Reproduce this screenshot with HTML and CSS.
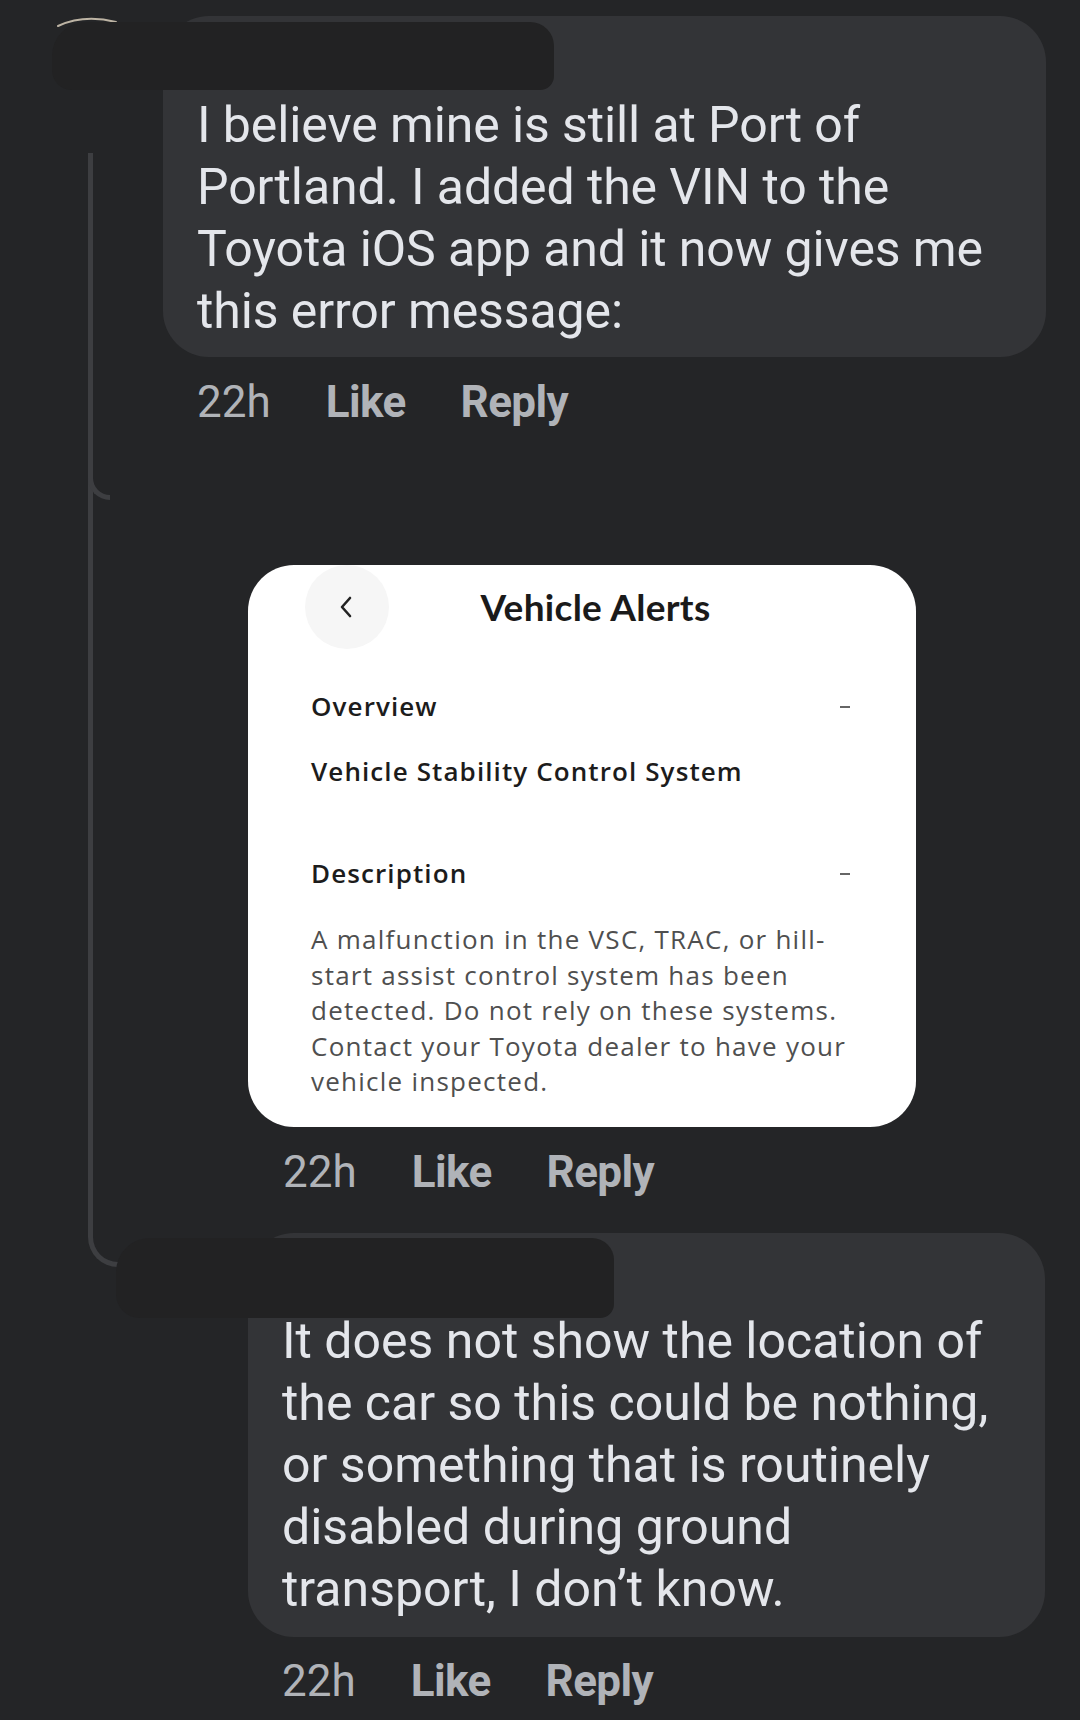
FILE: index.html
```html
<!DOCTYPE html>
<html lang="en">
<head>
<meta charset="utf-8">
<title>Comments</title>
<link rel="stylesheet" href="styles.css">
</head>
<body>
<div class="thread">
  <div class="thread-line"></div>
  <div class="thread-stub"></div>

  <div class="comment level1">
    <div class="bubble bubble-first">
      I believe mine is still at Port of<br>
      Portland. I added the VIN to the<br>
      Toyota iOS app and it now gives me<br>
      this error message:
    </div>
    <div class="actions">
      <span class="time">22h</span>
      <span class="act">Like</span>
      <span class="act">Reply</span>
    </div>
  </div>

  <div class="comment level2 photo-comment">
    <div class="card">
      <div class="card-header">
        <div class="back-btn">
          <svg width="14" height="22" viewBox="0 0 14 22"><polyline points="11,2 3,11 11,20" fill="none" stroke="#222" stroke-width="2.6" stroke-linecap="round" stroke-linejoin="round"/></svg>
        </div>
        <div class="card-title">Vehicle Alerts</div>
      </div>
      <div class="card-row row-overview">
        <span class="row-label">Overview</span>
        <span class="dash"></span>
      </div>
      <div class="row-value">Vehicle Stability Control System</div>
      <div class="card-row row-desc">
        <span class="row-label">Description</span>
        <span class="dash"></span>
      </div>
      <div class="desc-text">
        A malfunction in the VSC, TRAC, or hill-<br>
        start assist control system has been<br>
        detected. Do not rely on these systems.<br>
        Contact your Toyota dealer to have your<br>
        vehicle inspected.
      </div>
    </div>
    <div class="actions">
      <span class="time">22h</span>
      <span class="act">Like</span>
      <span class="act">Reply</span>
    </div>
  </div>

  <div class="comment level2 text-comment">
    <div class="bubble bubble-third">
      It does not show the location of<br>
      the car so this could be nothing,<br>
      or something that is routinely<br>
      disabled during ground<br>
      transport, I don’t know.
    </div>
    <div class="actions">
      <span class="time">22h</span>
      <span class="act">Like</span>
      <span class="act">Reply</span>
    </div>
  </div>

  <svg class="avatar-edge" width="80" height="20" viewBox="0 0 80 20"><path d="M4 14 Q 30 2 62 10" fill="none" stroke="#bdb4a4" stroke-width="2" stroke-linecap="round"/></svg>
  <div class="scribble scribble-one"></div>
  <div class="scribble scribble-two"></div>
</div>
</body>
</html>
```

FILE: styles.css
```css
html, body {
  margin: 0;
  padding: 0;
}
body {
  background: #242527;
  width: 1080px;
  height: 1720px;
  overflow: hidden;
  font-family: Roboto, "Liberation Sans", Arial, sans-serif;
}
.thread {
  position: relative;
  padding-top: 16px;
}
.comment {
  display: flex;
  flex-direction: column;
  align-items: flex-start;
}
.level1 {
  padding-left: 163px;
  padding-right: 34px;
}
.level2 {
  padding-left: 248px;
  padding-right: 35px;
}
.bubble {
  box-sizing: border-box;
  background: #333437;
  border-radius: 46px;
  color: #e4e6eb;
  font-size: 50px;
  line-height: 62px;
  white-space: nowrap;
}
.bubble-first {
  width: 883px;
  padding: 78px 34px 15px 34px;
  letter-spacing: -0.1px;
}
.bubble-third {
  width: 797px;
  padding: 77px 34px 17px 34px;
}
.actions {
  display: flex;
  gap: 55px;
  margin-top: 19px;
  padding-left: 34px;
  font-size: 44px;
  line-height: 52px;
  color: #b0b3b8;
}
.time {
  font-weight: 400;
}
.act {
  font-weight: 700;
  letter-spacing: -0.6px;
}
.photo-comment {
  margin-top: 137px;
}
.photo-comment .actions {
  padding-left: 35px;
}
.text-comment {
  margin-top: 35px;
}
.text-comment .actions {
  margin-top: 18px;
  padding-left: 34px;
}

/* Screenshot card */
.card {
  box-sizing: border-box;
  width: 668px;
  height: 562px;
  background: #ffffff;
  border-radius: 46px;
  font-family: "Open Sans", Lato, sans-serif;
  color: #1c1c1c;
  padding: 0 66px 0 63px;
}
.card-header {
  display: flex;
  align-items: center;
  height: 84px;
  margin-left: -6px;
  margin-right: 48px;
}
.back-btn {
  width: 84px;
  height: 84px;
  border-radius: 50%;
  background: #f6f6f6;
  display: flex;
  align-items: center;
  justify-content: center;
  flex: none;
}
.back-btn svg {
  margin-left: -2px;
}
.card-title {
  flex: 1;
  text-align: center;
  font-family: Lato, "Open Sans", sans-serif;
  font-size: 37px;
  font-weight: 700;
  line-height: 44px;
  letter-spacing: 0.3px;
  color: #1a1a1a;
}
.card-row {
  display: flex;
  align-items: center;
  justify-content: space-between;
  font-size: 26px;
  line-height: 36px;
  font-weight: 600;
  letter-spacing: 1.1px;
}
.row-overview {
  margin-top: 39px;
}
.row-value {
  margin-top: 29px;
  font-size: 26px;
  line-height: 36px;
  font-weight: 600;
  letter-spacing: 1.1px;
}
.row-desc {
  margin-top: 66px;
}
.dash {
  width: 10px;
  height: 2px;
  background: #666;
  margin-top: 2px;
}
.desc-text {
  margin-top: 31px;
  font-size: 26px;
  line-height: 35.5px;
  color: #4f4f4f;
  white-space: nowrap;
  letter-spacing: 1.25px;
}

/* Thread connector lines */
.thread-line {
  position: absolute;
  left: 88px;
  top: 153px;
  width: 48px;
  height: 1114px;
  border-left: 5px solid #3d3e41;
  border-bottom: 5px solid #3d3e41;
  border-bottom-left-radius: 30px;
  box-sizing: border-box;
}
.thread-stub {
  position: absolute;
  left: 88px;
  top: 450px;
  width: 22px;
  height: 50px;
  border-left: 5px solid #3d3e41;
  border-bottom: 5px solid #3d3e41;
  border-bottom-left-radius: 24px;
  box-sizing: border-box;
}

/* Redaction scribbles */
.scribble {
  position: absolute;
  background: #222223;
}
.scribble-one {
  left: 52px;
  top: 22px;
  width: 502px;
  height: 68px;
  border-radius: 34px 24px 14px 20px;
}
.scribble-two {
  left: 116px;
  top: 1238px;
  width: 498px;
  height: 80px;
  border-radius: 34px 22px 14px 24px;
}
.avatar-edge {
  position: absolute;
  left: 54px;
  top: 12px;
}
```
